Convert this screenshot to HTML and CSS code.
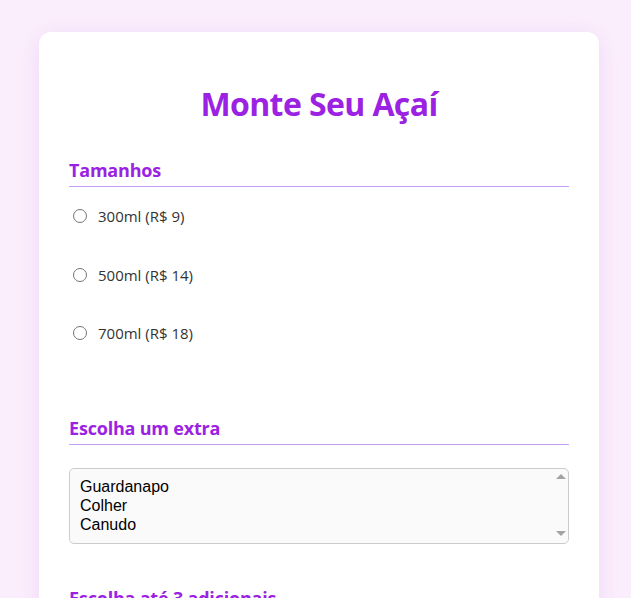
FILE: index.html
```html
<!DOCTYPE html>
<html lang="pt-BR">
<head>
<meta charset="utf-8">
<title>Monte Seu Açaí</title>
<link rel="stylesheet" href="styles.css">
</head>
<body>
<main class="card">
  <h1 class="title">Monte Seu Açaí</h1>

  <section class="section">
    <h2 class="section-title">Tamanhos</h2>
    <div class="options">
      <label class="option"><input type="radio" name="tamanho" value="300"> <span>300ml (R$ 9)</span></label>
      <label class="option"><input type="radio" name="tamanho" value="500"> <span>500ml (R$ 14)</span></label>
      <label class="option"><input type="radio" name="tamanho" value="700"> <span>700ml (R$ 18)</span></label>
    </div>
  </section>

  <section class="section section-extra">
    <h2 class="section-title">Escolha um extra</h2>
    <div class="select-wrap">
      <select class="extra-select" size="3">
        <option>Guardanapo</option>
        <option>Colher</option>
        <option>Canudo</option>
      </select>
      <span class="scroll-arrow scroll-up" aria-hidden="true"></span>
      <span class="scroll-arrow scroll-down" aria-hidden="true"></span>
    </div>
  </section>

  <section class="section section-add">
    <h2 class="section-title">Escolha até 3 adicionais</h2>
  </section>
</main>
</body>
</html>
```

FILE: styles.css
```css
html, body {
  margin: 0;
  padding: 0;
}

body {
  background: #fbeefc;
  font-family: "Open Sans", "Noto Sans", sans-serif;
  color: #333;
  padding: 32px 32px 40px 39px;
}

.card {
  width: 500px;
  background: #fff;
  border-radius: 12px;
  padding: 30px;
  box-shadow: 0 4px 24px rgba(170, 90, 220, 0.14);
}

.title {
  margin: 20px 0 32px;
  text-align: center;
  font-size: 32px;
  line-height: 44px;
  font-weight: 700;
  color: #9b22e2;
  letter-spacing: -0.6px;
}

.section-title {
  margin: 0;
  font-size: 18px;
  line-height: 24px;
  font-weight: 700;
  color: #9b22e2;
  border-bottom: 1px solid #c99ef5;
  padding-bottom: 4px;
  letter-spacing: -0.2px;
}

.options {
  display: flex;
  flex-direction: column;
  gap: 36px;
  padding-top: 18px;
}

.option {
  display: flex;
  align-items: center;
  gap: 11px;
  font-size: 15px;
  line-height: 22.5px;
  color: #333;
}

.option input {
  margin: 0 0 0 4px;
  width: 14px;
  height: 14px;
}

.section-extra {
  margin-top: 71px;
}

.select-wrap {
  position: relative;
  margin-top: 23px;
}

.extra-select {
  display: block;
  width: 500px;
  height: 76px;
  padding: 9px 0 6px 10px;
  box-sizing: border-box;
  border: 1px solid #ccc;
  border-radius: 5px;
  background: #fafafa;
  font-family: "Liberation Sans", Arial, sans-serif;
  font-size: 16px;
  color: #000;
  outline: none;
}

.extra-select option {
  padding: 0;
  line-height: 18px;
}

.scroll-arrow {
  position: absolute;
  right: 3px;
  width: 0;
  height: 0;
  border-left: 5px solid transparent;
  border-right: 5px solid transparent;
}

.scroll-up {
  top: 6px;
  border-bottom: 5px solid #a3a3a3;
}

.scroll-down {
  bottom: 8px;
  border-top: 5px solid #a3a3a3;
}

.section-add {
  margin-top: 42px;
}
```
